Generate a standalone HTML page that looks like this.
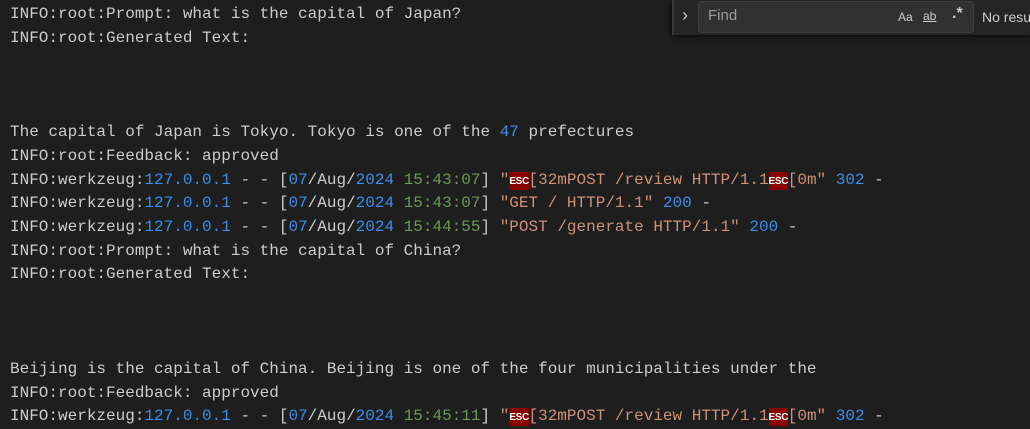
<!DOCTYPE html>
<html><head><meta charset="utf-8"><style>
html,body{margin:0;padding:0;background:#1e1e1e;width:1030px;height:428px;overflow:hidden}
pre{margin:0;position:absolute;left:10px;top:3px;font-family:"Liberation Mono",monospace;font-size:16px;line-height:23.65px;color:#cccccc;white-space:pre}
.b{color:#3b8eea}.g{color:#6a9955}.o{color:#ce9178}
.e{display:inline-block;width:19.2px;height:18px;background:#8b0000;color:#fff;font-family:"Liberation Sans",sans-serif;font-size:10px;font-weight:bold;line-height:19px;text-align:center;vertical-align:top;position:relative;top:3px;letter-spacing:-0.3px}
.find{position:absolute;left:672px;top:0;width:358px;height:35px;background:#252526;box-shadow:0 0 6px #000;border-left:2px solid #3a3a3a}
.inp{position:absolute;left:24px;top:1px;width:274px;height:30px;background:#313131;border:1px solid #3c3c3c;border-radius:3px}
.find span{position:absolute;font-family:"Liberation Sans",sans-serif;color:#ccc}
</style></head><body>
<pre>INFO:root:Prompt: what is the capital of Japan?
INFO:root:Generated Text:



The capital of Japan is Tokyo. Tokyo is one of the <span class="b">47</span> prefectures
INFO:root:Feedback: approved
INFO:werkzeug:<span class="b">127.0.0.1</span> - - [<span class="b">07</span>/Aug/<span class="b">2024</span> <span class="g">15:43:07</span>] <span class="o">"<span class="e">ESC</span>[32mPOST /review HTTP/1.1<span class="e">ESC</span>[0m"</span> <span class="b">302</span> -
INFO:werkzeug:<span class="b">127.0.0.1</span> - - [<span class="b">07</span>/Aug/<span class="b">2024</span> <span class="g">15:43:07</span>] <span class="o">"GET / HTTP/1.1"</span> <span class="b">200</span> -
INFO:werkzeug:<span class="b">127.0.0.1</span> - - [<span class="b">07</span>/Aug/<span class="b">2024</span> <span class="g">15:44:55</span>] <span class="o">"POST /generate HTTP/1.1"</span> <span class="b">200</span> -
INFO:root:Prompt: what is the capital of China?
INFO:root:Generated Text:



Beijing is the capital of China. Beijing is one of the four municipalities under the
INFO:root:Feedback: approved
INFO:werkzeug:<span class="b">127.0.0.1</span> - - [<span class="b">07</span>/Aug/<span class="b">2024</span> <span class="g">15:45:11</span>] <span class="o">"<span class="e">ESC</span>[32mPOST /review HTTP/1.1<span class="e">ESC</span>[0m"</span> <span class="b">302</span> -</pre>
<div class="find">
<span style="left:8px;top:5px;font-size:18px">&#8250;</span>
<div class="inp"></div>
<span style="left:34px;top:7px;font-size:15px;color:#9a9a9a">Find</span>
<span style="left:224px;top:10px;font-size:12px">Aa</span>
<span style="left:249px;top:9px;font-size:12px;text-decoration:underline">ab</span>
<span style="left:278px;top:5px;font-size:16px;font-weight:bold">.*</span>
<span style="left:308px;top:9px;font-size:14px">No resu</span>
</div>
</body></html>
